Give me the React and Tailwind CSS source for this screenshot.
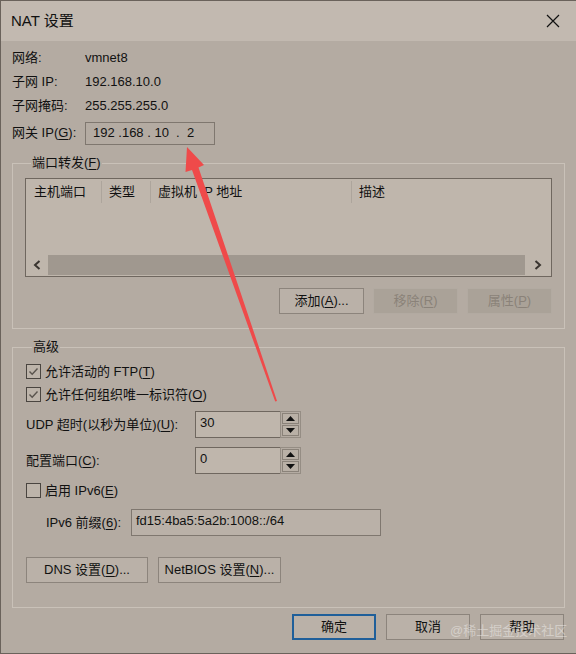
// NAT 设置 dialog — VMware virtual network editor, sepia-tinted screenshot.

function U({ children }) {
  return <span className="underline underline-offset-2">{children}</span>
}

function Btn({ children, disabled, focused, className = '' }) {
  return (
    <button
      className={
        'flex items-center justify-center h-[26px] text-[13px] ' +
        (disabled
          ? 'bg-[#aaa298] border border-[#b2aaa1] text-[#8a8279] '
          : focused
            ? 'bg-[#bab1a8] border-2 border-[#1f5f9a] text-[#111] '
            : 'bg-[#bab1a8] border border-[#8c847c] text-[#111] ') +
        className
      }
    >
      {children}
    </button>
  )
}

function Check({ checked }) {
  return (
    <div className="w-[15px] h-[15px] border border-[#4a4540] bg-[#bdb4aa] flex items-center justify-center">
      {checked && (
        <svg width="11" height="11" viewBox="0 0 11 11">
          <path d="M1.5 5.5 L4.2 8.3 L9.5 2.5" fill="none" stroke="#5a544e" strokeWidth="1.4" />
        </svg>
      )}
    </div>
  )
}

function Spin({ value }) {
  return (
    <div className="flex h-[27px] w-[106px]">
      <div className="flex-1 h-full bg-[#bfb6ac] border-t border-l border-b border-[#6f675f] px-[4px] pt-[2px] text-[13px] leading-[18px]">
        {value}
      </div>
      <div className="w-[21px] h-full border border-[#958d84] flex flex-col p-[1px] gap-[1px]">
        <div className="flex-1 border border-[#8a8279] bg-[#b9b0a6] flex items-center justify-center">
          <svg width="9" height="5" viewBox="0 0 9 5"><path d="M0 5 L4.5 0 L9 5 Z" fill="#111" /></svg>
        </div>
        <div className="flex-1 border border-[#8a8279] bg-[#b9b0a6] flex items-center justify-center">
          <svg width="9" height="5" viewBox="0 0 9 5"><path d="M0 0 L4.5 5 L9 0 Z" fill="#111" /></svg>
        </div>
      </div>
    </div>
  )
}

function Row({ label, children }) {
  return (
    <div className="flex items-center h-6">
      <span className="w-[73px]">{label}</span>
      <span>{children}</span>
    </div>
  )
}

export default function App() {
  return (
    <div className="relative w-[576px] h-[654px] bg-[#b4aba2] border-l border-t border-b border-[#6a625b] text-[#111] text-[13px] font-['Liberation_Sans','Noto_Sans_CJK_SC',sans-serif] overflow-hidden">
      {/* title bar */}
      <div className="h-[40px] bg-[#c2b9b0] flex items-center justify-between pl-[10px] pr-[16px]">
        <span className="text-[15px]">NAT 设置</span>
        <svg width="14" height="14" viewBox="0 0 14 14">
          <path d="M1 1 L13 13 M13 1 L1 13" stroke="#111" strokeWidth="1.2" />
        </svg>
      </div>

      <div className="px-[11px] pt-[5px]">
        <Row label="网络:">vmnet8</Row>
        <Row label="子网 IP:">192.168.10.0</Row>
        <Row label="子网掩码:">255.255.255.0</Row>
        <div className="flex items-center h-6 mt-[3px]">
          <span className="w-[73px]">
            网关 IP(<U>G</U>):
          </span>
          <div className="w-[130px] h-[23px] border border-[#7f776f] pl-[7px] flex items-center whitespace-pre">
            {'192 .168 . 10  .  2'}
          </div>
        </div>

        {/* port forwarding */}
        <fieldset className="mt-[9px] border border-[#c9c1b8] px-[12px] pt-[6px] pb-[14px]">
          <legend className="ml-[6px] px-[1px] leading-[18px]">
            端口转发(<U>F</U>)
          </legend>
          <div className="h-[99px] border border-[#6f675f] bg-[#bfb6ac] flex flex-col">
            <div className="flex h-[26px] items-center">
              <div className="w-[76px] pl-[8px] border-r border-[#ada59c] h-[22px] flex items-center">主机端口</div>
              <div className="w-[49px] pl-[7px] border-r border-[#ada59c] h-[22px] flex items-center">类型</div>
              <div className="w-[201px] pl-[7px] border-r border-[#ada59c] h-[22px] flex items-center">虚拟机 IP 地址</div>
              <div className="pl-[7px] h-[22px] flex items-center">描述</div>
            </div>
            <div className="flex-1" />
            <div className="h-[20px] mb-[1px] flex items-center">
              <div className="w-[22px] flex justify-center">
                <svg width="8" height="10" viewBox="0 0 8 10"><path d="M6.5 1 L2 5 L6.5 9" fill="none" stroke="#3a3530" strokeWidth="2" /></svg>
              </div>
              <div className="flex-1 h-full bg-[#a0988f]" />
              <div className="w-[26px] flex justify-center">
                <svg width="8" height="10" viewBox="0 0 8 10"><path d="M1.5 1 L6 5 L1.5 9" fill="none" stroke="#3a3530" strokeWidth="2" /></svg>
              </div>
            </div>
          </div>
          <div className="flex justify-end gap-[9px] mt-[11px]">
            <Btn className="w-[85px]">
              添加(<U>A</U>)...
            </Btn>
            <Btn disabled className="w-[85px]">
              移除(<U>R</U>)
            </Btn>
            <Btn disabled className="w-[85px]">
              属性(<U>P</U>)
            </Btn>
          </div>
        </fieldset>

        {/* advanced */}
        <fieldset className="mt-[9px] border border-[#c9c1b8] pl-[13px] pr-[12px] pt-[4px] pb-[24px]">
          <legend className="ml-[6px] px-[1px] leading-[18px]">高级</legend>
          <div className="flex items-center gap-[4px] h-[23px]">
            <Check checked />
            <span>
              允许活动的 FTP(<U>T</U>)
            </span>
          </div>
          <div className="flex items-center gap-[4px] h-[23px]">
            <Check checked />
            <span>
              允许任何组织唯一标识符(<U>O</U>)
            </span>
          </div>
          <div className="flex items-center mt-[5px]">
            <span className="w-[169px]">
              UDP 超时(以秒为单位)(<U>U</U>):
            </span>
            <Spin value="30" />
          </div>
          <div className="flex items-center mt-[9px]">
            <span className="w-[169px]">
              配置端口(<U>C</U>):
            </span>
            <Spin value="0" />
          </div>
          <div className="flex items-center gap-[4px] h-[23px] mt-[5px]">
            <Check />
            <span>
              启用 IPv6(<U>E</U>)
            </span>
          </div>
          <div className="flex items-center mt-[7px] pl-[20px]">
            <span className="w-[85px]">
              IPv6 前缀(<U>6</U>):
            </span>
            <div className="w-[250px] h-[27px] border border-[#7f776f] bg-[#bab1a8] px-[4px] pt-[2px] leading-[18px]">
              fd15:4ba5:5a2b:1008::/64
            </div>
          </div>
          <div className="flex gap-[10px] mt-[21px]">
            <Btn className="w-[122px]">
              DNS 设置(<U>D</U>)...
            </Btn>
            <Btn className="w-[123px]">
              NetBIOS 设置(<U>N</U>)...
            </Btn>
          </div>
        </fieldset>

        <div className="flex justify-end gap-[10px] mt-[6px] pr-[1px]">
          <Btn focused className="w-[84px]">确定</Btn>
          <Btn className="w-[84px]">取消</Btn>
          <Btn className="w-[84px]">帮助</Btn>
        </div>
      </div>

      {/* watermark */}
      <span className="absolute left-[449px] top-[620px] whitespace-nowrap text-[13px] text-white/40 pointer-events-none">
        @稀土掘金技术社区
      </span>

      {/* red annotation arrow */}
      <svg className="absolute left-0 top-0 pointer-events-none" width="576" height="654" viewBox="0 0 576 654">
        <polygon
          points="186,146 203,164 197.5,166.5 276,400 274.2,400.6 191,169 184.5,171"
          fill="#ef4a4a"
        />
      </svg>
    </div>
  )
}
